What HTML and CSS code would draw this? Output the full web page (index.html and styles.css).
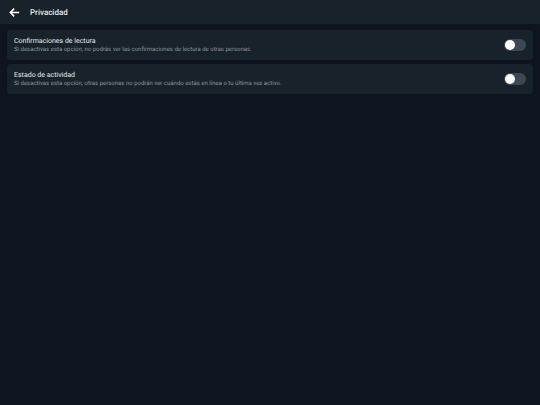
FILE: index.html
```
<!DOCTYPE html>
<html lang="es">
<head>
    <meta charset="UTF-8">
    <meta name="viewport" content="width=device-width, initial-scale=1.0">
    <title>Privacidad</title>
    <link rel="stylesheet" href="styles.css">
</head>
<body>

    <header class="topbar">
        <button class="back-button" type="button" aria-label="Volver">
            <svg viewBox="0 0 10 10" aria-hidden="true">
                <path d="M9.2 5H1.2M4.7 1.5L1.2 5l3.5 3.5"/>
            </svg>
        </button>
        <h1>Privacidad</h1>
    </header>

    <main class="settings">
        <div class="setting-card">
            <div class="setting-text">
                <label class="setting-title" for="readReceipts">Confirmaciones de lectura</label>
                <p id="readReceiptsInfo">Si desactivas esta opción, no podrás ver las confirmaciones de lectura de otras personas.</p>
            </div>
            <input class="toggle" type="checkbox" id="readReceipts" aria-describedby="readReceiptsInfo">
        </div>

        <div class="setting-card">
            <div class="setting-text">
                <label class="setting-title" for="activityStatus">Estado de actividad</label>
                <p id="activityStatusInfo">Si desactivas esta opción, otras personas no podrán ver cuándo estás en línea o tu última vez activo.</p>
            </div>
            <input class="toggle" type="checkbox" id="activityStatus" aria-describedby="activityStatusInfo">
        </div>
    </main>

</body>
</html>
```
FILE: styles.css
```
* {
    box-sizing: border-box;
}

body {
    font-family: Roboto, sans-serif;
    text-rendering: geometricPrecision;
    margin: 0;
    min-height: 100vh;
    background-color: #0e1520;
    color: #e2e8ec;
}

.topbar {
    display: flex;
    align-items: center;
    gap: 10px;
    height: 24px;
    padding: 0 9px;
    background-color: #18222b;
}

.topbar h1 {
    margin: 0;
    font-size: 8px;
    line-height: 13px;
    font-weight: 500;
}

.back-button {
    display: flex;
    padding: 0;
    border: none;
    background: none;
    color: #fff;
    cursor: pointer;
}

.back-button svg {
    width: 11px;
    height: 11px;
    fill: none;
    stroke: currentColor;
    stroke-width: 1.4;
}

.settings {
    display: flex;
    flex-direction: column;
    gap: 4px;
    padding: 6px 7px;
}

.setting-card {
    display: flex;
    align-items: center;
    justify-content: space-between;
    gap: 8px;
    padding: 6px 7px;
    border-radius: 4px;
    background-color: #18222b;
}

.setting-title {
    display: block;
    font-size: 7px;
    line-height: 10px;
    font-weight: 400;
}

.setting-text p {
    margin: 0;
    font-size: 6px;
    line-height: 8px;
    color: #8b949e;
}

.toggle {
    appearance: none;
    flex: none;
    display: flex;
    align-items: center;
    width: 22px;
    height: 12px;
    margin: 0;
    padding: 0 1px;
    border-radius: 6px;
    background-color: #3d4855;
    cursor: pointer;
}

.toggle::before {
    content: "";
    width: 10px;
    height: 10px;
    border-radius: 50%;
    background-color: #fff;
}

.toggle:checked {
    justify-content: flex-end;
    background-color: #2f81f7;
}
```
